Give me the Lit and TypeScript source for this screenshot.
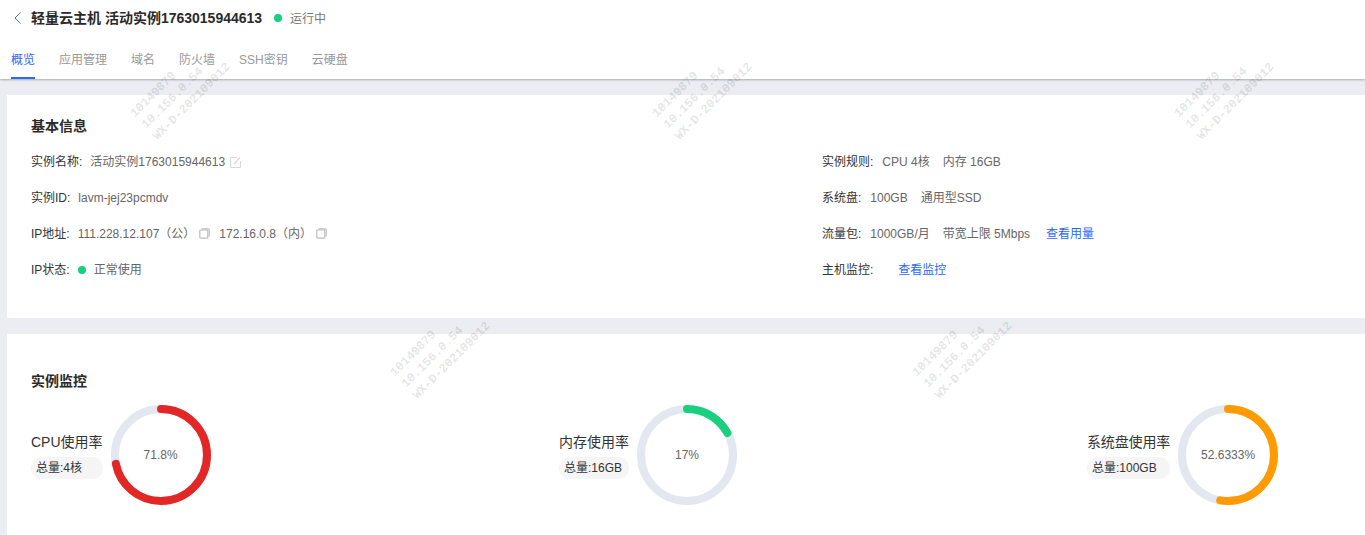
import { LitElement, html, css, svg } from "lit";
import { customElement } from "lit/decorators.js";

const copyIcon = html`<svg class="copy" viewBox="0 0 11 11" width="11" height="11" fill="none" stroke="#bdbdbd" stroke-width="1.2"><rect x="0.8" y="2" width="8" height="8.2" rx="1"/><path d="M2.5 0.8h6.7a1 1 0 0 1 1 1v6.7"/></svg>`;

const donut = (pct: number, color: string) => {
  const r = 46;
  const c = 2 * Math.PI * r;
  return html`<div class="donut">
    <svg viewBox="0 0 100 100" width="100" height="100">
      ${svg`<circle cx="50" cy="50" r="46" fill="none" stroke="#e3e7f0" stroke-width="8"/>
      <circle cx="50" cy="50" r="46" fill="none" stroke=${color} stroke-width="8" stroke-linecap="round"
        stroke-dasharray="${(pct / 100) * c} ${c}" transform="rotate(-90 50 50)"/>`}
    </svg>
    <span class="pct">${pct}%</span>
  </div>`;
};

@customElement("app-root")
export class AppRoot extends LitElement {
  static styles = css`
    :host {
      display: block;
      position: relative;
      height: 535px;
      overflow: hidden;
      background: #ecedf2;
      font-family: "Liberation Sans", "Noto Sans CJK SC", sans-serif;
      font-size: 12px;
      color: #333;
    }
    header {
      height: 79px;
      background: #fff;
      box-shadow: 0 1px 2px rgba(0, 0, 0, 0.28);
      position: relative;
      display: flex;
      flex-direction: column;
    }
    .top {
      display: flex;
      align-items: center;
      height: 35px;
      padding-left: 14px;
    }
    .back { margin-right: 8px; flex: none; }
    .name { font-size: 14px; font-weight: 700; color: #2a2a2a; margin-bottom: 2px; }
    .dot {
      display: inline-block;
      width: 8px;
      height: 8px;
      border-radius: 50%;
      background: #19d07f;
      flex: none;
    }
    .top .dot { margin: 0 8px 0 12px; }
    .status { color: #777; }
    nav {
      display: flex;
      gap: 24px;
      padding-left: 11px;
      margin-top: 8px;
      height: 36px;
    }
    nav a {
      color: #999;
      line-height: 34px;
      height: 36px;
      box-sizing: border-box;
    }
    nav a.active {
      color: #2e66ff;
      border-bottom: 2px solid #2e66ff;
    }
    main {
      padding: 16px 0 0 7px;
      display: flex;
      flex-direction: column;
      gap: 16px;
    }
    .card { background: #fff; padding-left: 24px; }
    .basic { height: 223px; padding-top: 21px; box-sizing: border-box; }
    h2 {
      margin: 0;
      font-size: 14px;
      line-height: 20px;
      font-weight: 700;
      color: #2a2a2a;
    }
    .grid {
      display: grid;
      grid-template-columns: 791px 1fr;
      grid-auto-rows: 36px;
      margin-top: 8px;
    }
    .row { line-height: 36px; height: 36px; color: #666; white-space: nowrap; }
    .row label { color: #333; margin-right: 8px; }
    .row:nth-child(even) label { margin-right: 9px; }
    .row .sp { margin-left: 13px; }
    .row .link { color: #2e66ff; margin-left: 16px; }
    .edit { margin-left: 5px; vertical-align: -2px; }
    .copy { margin: 0 9px 0 4px; vertical-align: -1px; }
    .row .dot { margin-right: 8px; vertical-align: 0; }
    .monitor { padding-top: 37px; height: 201px; box-sizing: border-box; overflow: hidden; }
    .gauges { display: flex; margin-top: 14px; }
    .gauge {
      flex: 0 0 528px;
      display: flex;
      align-items: center;
      gap: 8px;
    }
    .meta { display: flex; flex-direction: column; gap: 4px; align-items: stretch; }
    .meta .label { font-size: 14px; line-height: 22px; color: #333; white-space: nowrap; }
    .meta .label.tight { letter-spacing: -0.15px; }
    .meta .pill {
      height: 22px;
      line-height: 22px;
      border-radius: 11px;
      background: #f5f5f5;
      padding: 0 5px;
      white-space: nowrap;
    }
    .donut {
      position: relative;
      width: 100px;
      height: 100px;
      display: flex;
      align-items: center;
      justify-content: center;
    }
    .donut svg { position: absolute; inset: 0; }
    .pct { color: #666; }
    .wm {
      position: absolute;
      transform-origin: left top;
      transform: rotate(-45deg);
      font-family: "Liberation Mono", monospace;
      font-weight: 700;
      font-size: 12.3px;
      line-height: 16px;
      color: rgba(0, 0, 0, 0.1);
      -webkit-text-stroke: 0.3px rgba(0, 0, 0, 0.1);
      white-space: pre;
      pointer-events: none;
    }
  `;

  render() {
    const marks: [number, number][] = [
      [127, 110], [649, 110], [1171, 110], [387, 369], [909, 369],
    ];
    return html`
      <header>
        <div class="top">
          <svg class="back" width="9" height="12" viewBox="0 0 9 12" fill="none" stroke="#4a6fb0" stroke-width="1"><path d="M6.5 .5 1 6l5.5 5.5"/></svg>
          <span class="name">轻量云主机 活动实例1763015944613</span>
          <span class="dot"></span>
          <span class="status">运行中</span>
        </div>
        <nav>
          <a class="active">概览</a><a>应用管理</a><a>域名</a><a>防火墙</a><a>SSH密钥</a><a>云硬盘</a>
        </nav>
      </header>
      <main>
        <section class="card basic">
          <h2>基本信息</h2>
          <div class="grid">
            <div class="row"><label>实例名称:</label>活动实例1763015944613<svg class="edit" width="11" height="12" viewBox="0 0 11 12" fill="none" stroke="#d8d8d8"><path d="M7.5 1.5H.5v10h10V5"/><path d="M4 8l6-6.5" stroke-width="1.2"/></svg></div>
            <div class="row"><label>实例规则:</label>CPU 4核<span class="sp">内存 16GB</span></div>
            <div class="row"><label>实例ID:</label>lavm-jej23pcmdv</div>
            <div class="row"><label>系统盘:</label>100GB<span class="sp">通用型SSD</span></div>
            <div class="row"><label>IP地址:</label>111.228.12.107（公）${copyIcon}172.16.0.8（内）${copyIcon}</div>
            <div class="row"><label>流量包:</label>1000GB/月<span class="sp">带宽上限 5Mbps</span><a class="link">查看用量</a></div>
            <div class="row"><label>IP状态:</label><span class="dot"></span>正常使用</div>
            <div class="row"><label>主机监控:</label><a class="link">查看监控</a></div>
          </div>
        </section>
        <section class="card monitor">
          <h2>实例监控</h2>
          <div class="gauges">
            <div class="gauge">
              <div class="meta"><span class="label">CPU使用率</span><span class="pill">总量:4核</span></div>
              ${donut(71.8, "#e32626")}
            </div>
            <div class="gauge">
              <div class="meta"><span class="label">内存使用率</span><span class="pill">总量:16GB</span></div>
              ${donut(17, "#19d07f")}
            </div>
            <div class="gauge">
              <div class="meta"><span class="label tight">系统盘使用率</span><span class="pill">总量:100GB</span></div>
              ${donut(52.6333, "#ff9b00")}
            </div>
          </div>
        </section>
      </main>
      ${marks.map(
        ([x, y]) => html`<div class="wm" style="left:${x}px;top:${y}px">10149879
10.156.0.54
WX-D-202109012</div>`
      )}
    `;
  }
}
